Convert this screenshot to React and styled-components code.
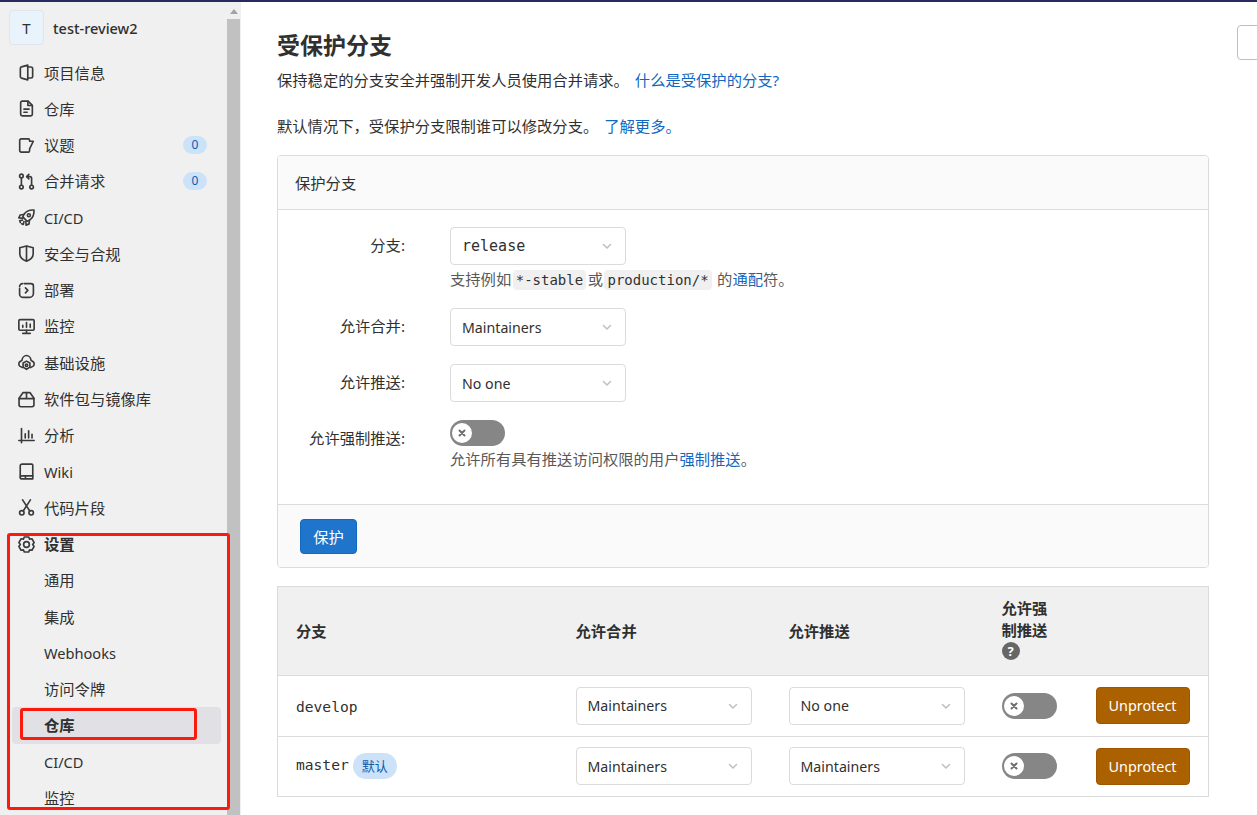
import React from "react";
import styled, { createGlobalStyle } from "styled-components";

const Global = createGlobalStyle`
  html, body { margin: 0; padding: 0; height: 100%; background: #fff; overflow: hidden; }
  body { font-family: "Noto Sans", "Noto Sans CJK SC", sans-serif; font-size: 15.3px; color: #303030; }
  * { box-sizing: border-box; }
`;

const Page = styled.div`
  width: 1257px; height: 815px; display: flex; flex-direction: column; overflow: hidden; position: relative;
`;
const TopBar = styled.div` height: 2px; background: #292961; flex: none; `;
const Body = styled.div` flex: 1; display: flex; min-height: 0; `;
const Sidebar = styled.aside`
  position: relative; width: 241px; flex: none; background: #f0f0f0; display: flex; overflow: hidden;
`;
const SideInner = styled.div` flex: 1; min-width: 0; padding: 0 6px 0 12px; `;
const SideHead = styled.div`
  height: 52.5px; display: flex; align-items: center; gap: 9px; margin-left: -3px; padding-bottom: 1px;
`;
const Avatar = styled.div`
  width: 35px; height: 35px; border-radius: 4px; background: #e9f3fc; border: 1px solid #dfe5ea;
  display: flex; align-items: center; justify-content: center; font-size: 15px;
`;
const ProjectName = styled.div` font-size: 14.5px; font-weight: 500; color: #303030; `;
const NavItem = styled.div`
  height: 36.28px; display: flex; align-items: center; gap: 9px; padding: 0 14px 0 ${p => (p.$sub ? 32 : 6)}px;
  font-weight: ${p => (p.$strong ? 700 : 400)}; border-radius: 4px; line-height: 20px; color: #303030;
  background: ${p => (p.$active ? "#e1e1e5" : "transparent")};
  svg { flex: none; }
`;
const NavLabel = styled.span` flex: 1; font-size: ${p => (p.$latin ? "14.6px" : "inherit")}; `;
const Count = styled.span`
  width: 24px; height: 18px; border-radius: 9px; background: #cbe2f9; color: #0b5cad; font-size: 12px;
  display: flex; align-items: center; justify-content: center;
`;
const Scrollbar = styled.div` width: 14px; flex: none; display: flex; flex-direction: column; align-items: stretch; `;
const ScrollArrow = styled.div`
  height: 17px; display: flex; justify-content: center; padding-top: 7px;
  &::before { content: ""; border: 4px solid transparent; border-top: 0; border-bottom: 5px solid #a3a3a3; height: 0; }
`;
const ScrollThumb = styled.div` flex: 1; background: #c1c1c1; margin-right: 1px; `;
const RedBox = styled.div`
  position: absolute; left: ${p => p.$x}px; top: ${p => p.$y}px; width: ${p => p.$w}px; height: ${p => p.$h}px;
  border: 3px solid #fa1a0e; border-radius: 3px; pointer-events: none;
`;

const Main = styled.main` flex: 1; min-width: 0; padding: 0 48px 0 36px; position: relative; `;
const Title = styled.h1` font-size: 23px; line-height: 32px; font-weight: 700; margin: 27px 0 0; color: #303030; `;
const Para = styled.p` margin: ${p => p.$top}px 0 0; line-height: 22px; `;
const Link = styled.a` color: #1068bf; text-decoration: none; `;
const Gap = styled.span` margin-left: ${p => p.$w || 6}px; `;

const Card = styled.section` margin-top: 18px; border: 1px solid #dbdbdb; border-radius: 4px; overflow: hidden; `;
const CardHead = styled.div`
  height: 54px; background: #fafafa; border-bottom: 1px solid #dbdbdb; display: flex; align-items: center; padding: 0 17px 2px;
`;
const CardForm = styled.div` padding: 17px 0 34px; display: flex; flex-direction: column; gap: 18px; `;
const FormRow = styled.div` display: grid; grid-template-columns: 130px 1fr; column-gap: 42px; `;
const FormLabel = styled.div` text-align: right; line-height: 22px; padding: ${p => p.$pt ?? 7}px 3px 0 0; `;
const Help = styled.div` color: #595959; height: 22px; line-height: 22px; margin-top: ${p => p.$mt ?? 3}px; white-space: nowrap; `;
const Code = styled.code`
  font-family: "DejaVu Sans Mono", monospace; font-size: 14px; background: #f0f0f0; color: #303030;
  border-radius: 4px; padding: 2px 3px; margin: 0 1.5px; line-height: 16px;
`;
const SelectBox = styled.div`
  width: 176px; height: 38px; border: 1px solid #dbdbdb; border-radius: 4px; background: #fff;
  display: flex; align-items: center; justify-content: space-between; padding: 0 12px 0 11px;
  font-family: ${p => (p.$mono ? '"DejaVu Sans Mono", monospace' : "inherit")};
  font-size: ${p => (p.$mono ? 15 : 14.2)}px;
`;
const Toggle = styled.div`
  width: 55px; height: 26px; border-radius: 13px; background: #868686; display: flex; align-items: center; padding-left: 2px;
`;
const Knob = styled.span`
  width: 20px; height: 20px; border-radius: 50%; background: #fff; display: flex; align-items: center; justify-content: center;
`;
const CardFoot = styled.div`
  height: 63px; background: #fafafa; border-top: 1px solid #dbdbdb; display: flex; align-items: center; padding-left: 22px;
`;
const Button = styled.button`
  font-family: inherit; font-size: ${p => (p.$warn ? 14.4 : 15.3)}px; color: #fff; border-radius: 4px; border: 1px solid ${p => (p.$warn ? "#9e5400" : "#1068bf")};
  background: ${p => (p.$warn ? "#ab6100" : "#1f75cb")}; padding: 0; height: ${p => (p.$warn ? 37 : 35)}px; width: ${p => (p.$warn ? 94 : 57)}px;
`;

const Table = styled.table`
  margin-top: 18px; width: 931px; border-collapse: collapse; table-layout: fixed; border: 1px solid #dbdbdb;
`;
const Th = styled.th`
  text-align: left; background: #f0f0f0; font-weight: 700; padding: ${p => (p.$tight ? "9px 19px 14px" : "11px 19px 12px")}; line-height: 22px; height: 89px;
  border-bottom: 1px solid #dbdbdb; vertical-align: middle;
  &:first-child { padding-left: 18px; }
`;
const Td = styled.td`
  padding: 0 19px; height: 60.5px; border-bottom: 1px solid #dbdbdb; vertical-align: middle;
  &:first-child { padding-left: 18px; }
`;
const BranchName = styled.span` font-family: "DejaVu Sans Mono", monospace; font-size: 14.6px; `;
const Pill = styled.span`
  display: inline-block; height: 26px; line-height: 26px; padding: 0 9px; margin-left: 4px; border-radius: 13px;
  background: #cbe2f9; color: #0b5cad; font-size: 13px; vertical-align: middle;
`;
const HelpIcon = styled.span`
  display: flex; width: 18px; height: 18px; border-radius: 50%; background: #666; color: #fff;
  align-items: center; justify-content: center; font-size: 13px; font-weight: 700; line-height: 1; margin-top: 1px;
`;
const Float = styled.div`
  position: absolute; right: -4px; top: 23px; width: 24px; height: 35px; border: 1px solid #bfbfbf; border-radius: 4px; background: #fff;
`;

const Ico = ({ children }) => (
  <svg width="17" height="17" viewBox="0 0 16 16" fill="none" stroke="#3a3a3a" strokeWidth="1.55" strokeLinecap="round" strokeLinejoin="round">
    {children}
  </svg>
);

const icons = {
  project: <Ico><path d="M9.200 1.100 3.300 2.700a1.400 1.400 0 0 0-1.100 1.400v7.800a1.400 1.400 0 0 0 1.100 1.400l5.900 1.600z" /><path d="M9.200 2.800h3a1.600 1.600 0 0 1 1.600 1.600v7.200a1.600 1.600 0 0 1-1.600 1.600h-3" /></Ico>,
  doc: <Ico><path d="M9.500 1H4a1.500 1.500 0 0 0-1.500 1.500v11A1.500 1.500 0 0 0 4 15h8a1.500 1.500 0 0 0 1.500-1.500V5z" /><path d="M9.300 1.200V5.200h4M5.600 8.600h4.800M5.600 11.500h3" /></Ico>,
  issues: <Ico><path d="M3 1.800h6.600a1.300 1.300 0 0 1 1.300 1.300v.9h3.500l-3.500 7.200v1.700a1.300 1.300 0 0 1-1.300 1.300H3a1.400 1.400 0 0 1-1.400-1.400V3.200A1.400 1.400 0 0 1 3 1.800z" /></Ico>,
  merge: <Ico><circle cx="3.200" cy="2.800" r="1.700" /><circle cx="3.200" cy="13.200" r="1.700" /><circle cx="12.800" cy="13.200" r="1.700" /><path d="M3.200 4.500v7M12.800 11.500V5a1.600 1.600 0 0 0-1.600-1.600H8.400M10.200 1.300 8.100 3.400l2.100 2.100" /></Ico>,
  rocket: <Ico><path d="M15 1c-4.300-.3-7.400 1-9.500 4.200l-1 2.200 4.100 4.100 2.200-1C14 8.400 15.300 5.300 15 1z" /><circle cx="10.200" cy="5.900" r="1.400" /><path d="M5.500 5.200 2 5.600.8 8.400l3.700.2M10.800 10.500l-.4 3.500-2.800 1.200-.2-3.700M4.200 10.500 1.600 11l.6 1.600M5.600 11.900 5 14.500l-1.600-.6" /></Ico>,
  shield: <Ico><path d="M8 .9 14.300 2.600v5.500c0 3.500-2.600 5.800-6.300 7.100C4.300 13.900 1.700 11.600 1.700 8.100V2.600z" /><path d="M8 1.300v13.500" /></Ico>,
  deploy: <Ico><path d="M5.800 1.500h6.400a2.300 2.300 0 0 1 2.300 2.300v7a3.700 3.700 0 0 1-3.700 3.700H4.800a3.300 3.300 0 0 1-3.300-3.300V6" /><path d="M1.500 4.300a2.800 2.800 0 0 1 2.800-2.800M7 5.600l2.300 2.300L7 10.200" /></Ico>,
  monitor: <Ico><rect x=".8" y="1.500" width="14.400" height="10" rx="1.200" /><path d="M8 11.500v3M4.500 14.500h7M4.500 8.800V7M8 8.800V4.300M11.500 8.800V5.800" /></Ico>,
  infra: <Ico><path d="M4.200 12.800 1.700 11.400C.5 10.400.5 8.300 1.700 7.300L3.700 6C4 3.600 5.800 1.400 8 1.400s4 2.200 4.300 4.600l2 1.300c1.200 1 1.200 3.100 0 4.100l-2.500 1.400" /><path d="M8 6.700 11.200 8.500v3.900L8 14.400l-3.200-2V8.500z" /><circle cx="8" cy="10.500" r="1.100" /></Ico>,
  pack: <Ico><path d="M4.800 1.500h6.400l3.800 5.300v6.200a1.800 1.800 0 0 1-1.800 1.800H2.800A1.800 1.800 0 0 1 1 13V6.800z" /><path d="M1 7.200h14M8 1.500v5.700" /></Ico>,
  chart: <Ico><path d="M3.300 1.500v13.300M.8 12.700h14.400M6.800 10.300V6.500M10 10.300V3.500M13.200 10.300V6.800" /></Ico>,
  book: <Ico><path d="M3.800 1h9a1.100 1.100 0 0 1 1.100 1.100v10H3.800a1.700 1.700 0 0 0-1.700 1V2.700A1.700 1.700 0 0 1 3.800 1z" /><path d="M2.100 13.300c0 .9.800 1.700 1.700 1.700h10.100v-2.900M7 15v-2.900" /></Ico>,
  snippet: <Ico><circle cx="3.600" cy="13" r="2.100" /><circle cx="12.400" cy="13" r="2.100" /><path d="M4.900 11.300 11.700.8M11.100 11.300 4.300.8" /></Ico>,
  gear: <Ico><path d="M5.900.9h4.200l.8 2 2.200-.3 2.100 3.600L13.800 8l1.400 1.800-2.100 3.600-2.200-.3-.8 2H5.900l-.8-2-2.200.3L.8 9.800 2.200 8 .8 6.200l2.100-3.600 2.200.3z" /><circle cx="8" cy="8" r="2.700" /></Ico>,
};

const Chevron = () => (
  <svg width="12" height="12" viewBox="0 0 12 12" fill="none" stroke="#bfbfbf" strokeWidth="1.500" strokeLinecap="round" strokeLinejoin="round">
    <path d="M2.500 4.500 6 8l3.500-3.500" />
  </svg>
);
const Cross = () => (
  <svg width="10" height="10" viewBox="0 0 10 10" fill="none" stroke="#6e6e6e" strokeWidth="2" strokeLinecap="round">
    <path d="M2.500 2.500l5 5M7.500 2.500l-5 5" />
  </svg>
);

const Select = ({ children, mono }) => (
  <SelectBox $mono={mono}><span>{children}</span><Chevron /></SelectBox>
);
const Switch = () => (<Toggle><Knob><Cross /></Knob></Toggle>);

const isLatin = s => /^[A-Za-z/]+$/.test(s);

const nav = [
  ["project", "项目信息"], ["doc", "仓库"], ["issues", "议题", 0], ["merge", "合并请求", 0], ["rocket", "CI/CD"],
  ["shield", "安全与合规"], ["deploy", "部署"], ["monitor", "监控"], ["infra", "基础设施"], ["pack", "软件包与镜像库"],
  ["chart", "分析"], ["book", "Wiki"], ["snippet", "代码片段"],
];
const sub = ["通用", "集成", "Webhooks", "访问令牌", "仓库", "CI/CD", "监控"];

export default function App() {
  return (
    <Page>
      <Global />
      <TopBar />
      <Body>
        <Sidebar>
          <SideInner>
            <SideHead><Avatar>T</Avatar><ProjectName>test-review2</ProjectName></SideHead>
            {nav.map(([icon, label, count]) => (
              <NavItem key={label}>
                {icons[icon]}
                <NavLabel $latin={isLatin(label)}>{label}</NavLabel>
                {count !== undefined && <Count>{count}</Count>}
              </NavItem>
            ))}
            <NavItem $strong>{icons.gear}<NavLabel>设置</NavLabel></NavItem>
            {sub.map(label => (
              <NavItem key={label} $sub $active={label === "仓库"} $strong={label === "仓库"}>
                <NavLabel $latin={isLatin(label)}>{label}</NavLabel>
              </NavItem>
            ))}
          </SideInner>
          <Scrollbar><ScrollArrow /><ScrollThumb /></Scrollbar>
          <RedBox $x={7} $y={531} $w={223} $h={277} />
          <RedBox $x={20} $y={706} $w={177} $h={32} />
        </Sidebar>
        <Main>
          <Title>受保护分支</Title>
          <Para $top={8}>保持稳定的分支安全并强制开发人员使用合并请求。<Gap><Link>什么是受保护的分支?</Link></Gap></Para>
          <Para $top={24}>默认情况下，受保护分支限制谁可以修改分支。<Gap><Link>了解更多。</Link></Gap></Para>
          <Card>
            <CardHead>保护分支</CardHead>
            <CardForm>
              <FormRow>
                <FormLabel>分支:</FormLabel>
                <div>
                  <Select mono>release</Select>
                  <Help>支持例如<Code>*-stable</Code>或<Code>production/*</Code> 的<Link>通配</Link>符。</Help>
                </div>
              </FormRow>
              <FormRow>
                <FormLabel>允许合并:</FormLabel>
                <Select>Maintainers</Select>
              </FormRow>
              <FormRow>
                <FormLabel>允许推送:</FormLabel>
                <Select>No one</Select>
              </FormRow>
              <FormRow>
                <FormLabel>允许强制推送:</FormLabel>
                <div>
                  <Switch />
                  <Help $mt={2}>允许所有具有推送访问权限的用户<Link>强制推送</Link>。</Help>
                </div>
              </FormRow>
            </CardForm>
            <CardFoot><Button>保护</Button></CardFoot>
          </Card>
          <Table>
            <colgroup>
              <col width="279" /><col width="213" /><col width="213" /><col width="94" /><col width="132" />
            </colgroup>
            <thead>
              <tr>
                <Th>分支</Th><Th>允许合并</Th><Th>允许推送</Th>
                <Th $tight>允许强制推送<HelpIcon>?</HelpIcon></Th><Th />
              </tr>
            </thead>
            <tbody>
              <tr>
                <Td><BranchName>develop</BranchName></Td>
                <Td><Select>Maintainers</Select></Td>
                <Td><Select>No one</Select></Td>
                <Td><Switch /></Td>
                <Td><Button $warn>Unprotect</Button></Td>
              </tr>
              <tr>
                <Td><BranchName>master</BranchName><Pill>默认</Pill></Td>
                <Td><Select>Maintainers</Select></Td>
                <Td><Select>Maintainers</Select></Td>
                <Td><Switch /></Td>
                <Td><Button $warn>Unprotect</Button></Td>
              </tr>
            </tbody>
          </Table>
          <Float />
        </Main>
      </Body>
    </Page>
  );
}
